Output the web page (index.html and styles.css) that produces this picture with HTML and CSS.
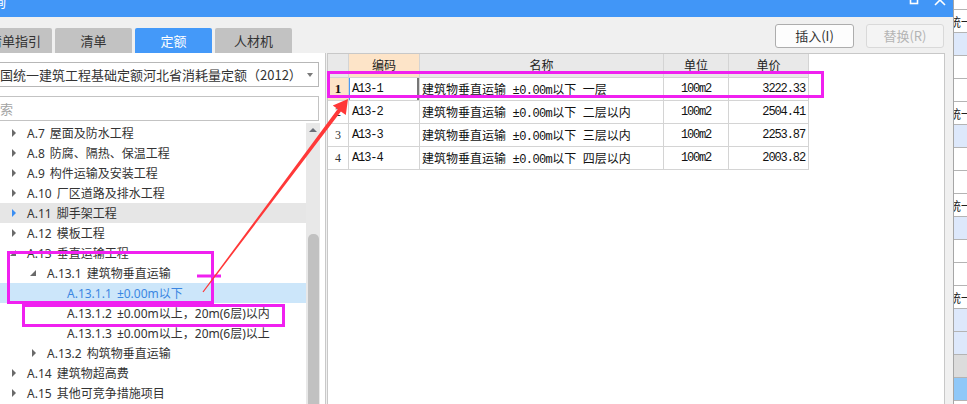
FILE: index.html
```html
<!DOCTYPE html>
<html lang="zh">
<head>
<meta charset="utf-8">
<title>定额</title>
<link rel="stylesheet" href="styles.css">
</head>
<body>
<div class="screen">
  <div class="window">
    <div class="titlebar">
      <span class="title">询</span>
      <div class="winctl">
        <svg class="ic" width="12" height="6" viewBox="0 0 12 6"><rect x="2.5" y="-5" width="7" height="8.5" fill="none" stroke="#fff" stroke-width="1.6"/></svg>
        <svg class="ic" width="12" height="6" viewBox="0 0 12 6"><path d="M1 -5 L11 5 M11 -5 L1 5" stroke="#fff" stroke-width="1.6"/></svg>
      </div>
    </div>
    <div class="main">
      <div class="left">
        <div class="tabs">
          <div class="tab first">清单指引</div>
          <div class="tab">清单</div>
          <div class="tab active">定额</div>
          <div class="tab">人材机</div>
        </div>
        <div class="leftpanel">
          <div class="select"><span class="select-text">全国统一建筑工程基础定额河北省消耗量定额（2012）</span><span class="caret"></span></div>
          <div class="search"><span class="placeholder">搜索</span></div>
          <div class="treewrap">
            <div class="tree">
              <div class="node l0"><i class="tri"></i><span>A.7 屋面及防水工程</span></div>
              <div class="node l0"><i class="tri"></i><span>A.8 防腐、隔热、保温工程</span></div>
              <div class="node l0"><i class="tri"></i><span>A.9 构件运输及安装工程</span></div>
              <div class="node l0"><i class="tri"></i><span>A.10 厂区道路及排水工程</span></div>
              <div class="node l0 hover"><i class="tri blue"></i><span>A.11 脚手架工程</span></div>
              <div class="node l0"><i class="tri"></i><span>A.12 模板工程</span></div>
              <div class="node l0"><i class="tri open"></i><span>A.13 垂直运输工程</span></div>
              <div class="node l1"><i class="tri open"></i><span>A.13.1 建筑物垂直运输</span></div>
              <div class="node l2 selected"><i class="tri none"></i><span>A.13.1.1 ±0.00m以下</span></div>
              <div class="node l2"><i class="tri none"></i><span>A.13.1.2 ±0.00m以上，20m(6层)以内</span></div>
              <div class="node l2"><i class="tri none"></i><span>A.13.1.3 ±0.00m以上，20m(6层)以上</span></div>
              <div class="node l1"><i class="tri"></i><span>A.13.2 构筑物垂直运输</span></div>
              <div class="node l0"><i class="tri"></i><span>A.14 建筑物超高费</span></div>
              <div class="node l0"><i class="tri"></i><span>A.15 其他可竞争措施项目</span></div>
            </div>
            <div class="vscroll"><span class="up"></span><span class="thumb"></span></div>
          </div>
        </div>
      </div>
      <div class="right">
        <div class="toolbar">
          <button class="btn">插入(I)</button>
          <button class="btn disabled" disabled>替换(R)</button>
        </div>
        <div class="gridpanel">
          <table class="grid">
            <colgroup>
              <col class="c-num"><col class="c-code"><col class="c-name"><col class="c-unit"><col class="c-price">
            </colgroup>
            <thead>
              <tr><th></th><th class="hcur">编码</th><th>名称</th><th>单位</th><th>单价</th></tr>
            </thead>
            <tbody>
              <tr class="cur"><td class="num">1</td><td class="code focus">A13-1</td><td class="name">建筑物垂直运输<span class="m"> ±0.00m</span>以下<span class="m"> </span>一层</td><td class="unit">100m2</td><td class="price">3222.33</td></tr>
              <tr><td class="num">2</td><td class="code">A13-2</td><td class="name">建筑物垂直运输<span class="m"> ±0.00m</span>以下<span class="m"> </span>二层以内</td><td class="unit">100m2</td><td class="price">2504.41</td></tr>
              <tr><td class="num">3</td><td class="code">A13-3</td><td class="name">建筑物垂直运输<span class="m"> ±0.00m</span>以下<span class="m"> </span>三层以内</td><td class="unit">100m2</td><td class="price">2253.87</td></tr>
              <tr><td class="num">4</td><td class="code">A13-4</td><td class="name">建筑物垂直运输<span class="m"> ±0.00m</span>以下<span class="m"> </span>四层以内</td><td class="unit">100m2</td><td class="price">2003.82</td></tr>
            </tbody>
          </table>
        </div>
      </div>
    </div>
  </div>
  <div class="behind">
    <div class="brow first"></div>
    <div class="brow"><span>统一</span></div>
    <div class="brow b"></div>
    <div class="brow"></div>
    <div class="brow"></div>
    <div class="brow"><span>统一</span></div>
    <div class="brow b"></div>
    <div class="brow"></div>
    <div class="brow"></div>
    <div class="brow"><span>统一</span></div>
    <div class="brow b"></div>
    <div class="brow"></div>
    <div class="brow"></div>
    <div class="brow"><span>统一</span></div>
    <div class="brow b"></div>
    <div class="brow b"></div>
    <div class="brow g"></div>
    <div class="brow bb"></div>
    <div class="brow"></div>
  </div>
  <svg class="annot" width="967" height="404" viewBox="0 0 967 404">
    <rect x="328.5" y="72.5" width="494" height="24" fill="none" stroke="#f020f0" stroke-width="3"/>
    <rect x="8.5" y="252.5" width="204" height="50" fill="none" stroke="#f020f0" stroke-width="3"/>
    <line x1="197" y1="276" x2="221" y2="276" stroke="#f020f0" stroke-width="3"/>
    <rect x="23.5" y="305.5" width="260" height="20" fill="none" stroke="#f020f0" stroke-width="3"/>
    <polygon points="202.5,291.7 337.7,109.1 332.8,105.6 348,99 345.8,115 340.9,111.5 203.5,292.3" fill="#ff3838"/>
  </svg>
</div>
</body>
</html>
```

FILE: styles.css
```css
* { box-sizing: border-box; }
html, body { margin: 0; padding: 0; }
body {
  font-family: "Noto Sans", "Noto Sans CJK SC", sans-serif;
  font-size: 12px;
  color: #333;
  background: #f0f0f0;
}
.screen {
  position: relative;
  display: flex;
  width: 967px;
  height: 404px;
  overflow: hidden;
}
.window {
  width: 953px;
  flex: none;
  display: flex;
  flex-direction: column;
  background: #f0f0f0;
}
.titlebar {
  height: 17px;
  flex: none;
  background: #4196f7;
  display: flex;
  align-items: flex-start;
  overflow: hidden;
}
.title {
  color: #fff;
  font-size: 13px;
  line-height: 13px;
  margin-top: -4px;
  margin-left: -7px;
}
.winctl {
  margin-left: auto;
  display: flex;
  gap: 14px;
  padding-right: 7px;
}
.ic { display: block; }
.main {
  flex: 1;
  display: flex;
  min-height: 0;
}
.left {
  width: 326px;
  flex: none;
  display: flex;
  flex-direction: column;
}
.tabs {
  margin-top: 11px;
  height: 25px;
  display: flex;
  gap: 3px;
  flex: none;
}
.tab {
  width: 77px;
  flex: none;
  height: 25px;
  line-height: 25px;
  text-align: center;
  font-family: "Noto Sans CJK SC", sans-serif;
  font-size: 13px;
  color: #333;
  background: #c2c2c2;
  border-radius: 2px 2px 0 0;
  white-space: nowrap;
  overflow: hidden;
}
.tab.first { width: 74px; margin-left: -22px; }
.tab.active { background: #4499f9; color: #fff; }
.leftpanel {
  flex: 1;
  background: #fff;
  border-right: 1px solid #c9c9c9;
  padding-top: 9px;
  display: flex;
  flex-direction: column;
  min-height: 0;
  overflow: hidden;
}
.select {
  height: 25px;
  width: 343px;
  margin-left: -24px;
  border: 1px solid #b7b7b7;
  display: flex;
  align-items: center;
  padding-left: 10px;
  padding-right: 5px;
  flex: none;
  overflow: hidden;
}
.select-text {
  font-family: "Noto Sans CJK SC", sans-serif;
  font-size: 13px;
  color: #333;
  white-space: nowrap;
  flex: none;
}
.caret {
  margin-left: auto;
  width: 0;
  height: 0;
  flex: none;
  border-left: 3.5px solid transparent;
  border-right: 3.5px solid transparent;
  border-top: 4px solid #7a7a7a;
}
.search {
  height: 25px;
  width: 343px;
  margin-left: -24px;
  margin-top: 9px;
  border: 1px solid #c3c3c3;
  display: flex;
  align-items: center;
  padding-left: 10px;
  flex: none;
}
.placeholder {
  font-family: "Noto Sans CJK SC", sans-serif;
  font-size: 13px;
  color: #a3a3a3;
}
.treewrap {
  margin-top: 2px;
  flex: 1;
  display: flex;
  min-height: 0;
}
.tree {
  width: 306px;
  flex: none;
}
.node {
  height: 20px;
  display: flex;
  align-items: center;
  white-space: nowrap;
  color: #333;
  word-spacing: 2px;
}
.node.l0 { padding-left: 10px; }
.node.l1 { padding-left: 30px; }
.node.l2 { padding-left: 50px; }
.node.hover { background: #e6e6e6; }
.node.selected { background: #cce6fa; color: #3b86e2; }
.tri {
  width: 17px;
  height: 20px;
  flex: none;
  position: relative;
  display: block;
}
.tri::before {
  content: "";
  position: absolute;
  left: 2px;
  top: 6px;
  border-left: 4px solid #6a6a6a;
  border-top: 4px solid transparent;
  border-bottom: 4px solid transparent;
}
.tri.blue::before { border-left-color: #3a8ef2; }
.tri.open::before {
  left: 0;
  top: 7px;
  border: none;
  width: 6px;
  height: 6px;
  background: #6a6a6a;
  clip-path: polygon(100% 0, 100% 100%, 0 100%);
}
.tri.none::before { display: none; }
.vscroll {
  width: 14px;
  flex: none;
  background: #e8e8e8;
  display: flex;
  flex-direction: column;
  align-items: center;
  padding-top: 5px;
  overflow: hidden;
}
.up {
  width: 0;
  height: 0;
  border-left: 4.5px solid transparent;
  border-right: 4.5px solid transparent;
  border-bottom: 4px solid #6b6f78;
  flex: none;
}
.thumb {
  margin-top: 102px;
  width: 11px;
  height: 220px;
  border-radius: 5px;
  background: #c1c1c1;
  flex: none;
}
.right {
  flex: 1;
  display: flex;
  flex-direction: column;
  padding-left: 1px;
  min-width: 0;
}
.toolbar {
  height: 36px;
  flex: none;
  display: flex;
  justify-content: flex-end;
  align-items: flex-start;
  padding-top: 7px;
  padding-right: 9px;
  gap: 12px;
}
.btn {
  width: 79px;
  height: 24px;
  margin: 0;
  padding: 0;
  border: 1px solid #adadad;
  border-radius: 3px;
  background: #fdfdfd;
  font-family: "Noto Sans CJK SC", sans-serif;
  font-size: 13px;
  color: #333;
  line-height: 20px;
}
.btn.disabled {
  width: 78px;
  border-color: #d9d9d9;
  background: #f4f4f4;
  color: #b4b4b4;
}
.gridpanel {
  flex: 1;
  margin-right: 8px;
  background: #fff;
  border: 1px solid #c8c8c8;
  border-bottom: none;
}
.grid {
  border-collapse: separate;
  border-spacing: 0;
  table-layout: fixed;
  width: 481px;
}
.c-num { width: 21px; }
.c-code { width: 71px; }
.c-name { width: 244px; }
.c-unit { width: 65px; }
.c-price { width: 80px; }
.grid th, .grid td {
  padding: 0;
  border-right: 1px solid #d4d4d4;
  border-bottom: 1px solid #d4d4d4;
  white-space: nowrap;
  overflow: hidden;
}
.grid thead tr { height: 24px; }
.grid th {
  background: #e9e9e9;
  font-family: "Noto Sans CJK SC", sans-serif;
  font-weight: normal;
  font-size: 12px;
  color: #222;
  text-align: center;
  line-height: 14px;
  vertical-align: top;
  padding-top: 4px;
}
.grid th.hcur { background: #fde4c8; }
.grid tbody tr { height: 23px; }
.grid td {
  font-family: "Noto Sans CJK SC", sans-serif;
  font-size: 12px;
  color: #111;
  vertical-align: middle;
}
.grid td.num {
  text-align: center;
  font-family: "Liberation Serif", serif;
  font-size: 12px;
  color: #333;
}
.grid tr.cur td.num {
  background: #fde4c8;
  font-weight: bold;
  font-size: 13px;
  color: #111;
}
.grid td.code {
  padding-left: 3px;
  font-family: "Liberation Mono", monospace;
  font-size: 12px;
  letter-spacing: -1.1px;
}
.grid td.code.focus {
  box-shadow: inset 1px 0 0 #4a9af5, inset -2px 0 0 #777;
}
.grid td.name { padding-left: 2px; }
.m {
  font-family: "Liberation Mono", monospace;
  font-size: 12px;
  letter-spacing: -0.6px;
  white-space: pre;
}
.grid td.unit {
  text-align: center;
  font-family: "Liberation Mono", monospace;
  font-size: 12px;
  letter-spacing: -1.2px;
}
.grid td.price {
  text-align: right;
  padding-right: 3px;
  font-family: "Liberation Mono", monospace;
  font-size: 12px;
  letter-spacing: -1.1px;
}
.behind {
  width: 14px;
  flex: none;
  background: #fff;
  border-left: 1px solid #a6a6a6;
  display: flex;
  flex-direction: column;
  overflow: hidden;
}
.brow {
  height: 23px;
  flex: none;
  border-bottom: 1px solid #b4b4b4;
  background: #fff;
  display: flex;
  align-items: center;
  overflow: hidden;
  white-space: nowrap;
}
.brow.first { height: 10px; }
.brow.b { background: #dde8fb; }
.brow.g { background: #dcdcdc; }
.brow.bb { background: #90c8f8; }
.brow span {
  font-family: "Noto Sans CJK SC", sans-serif;
  font-size: 12px;
  color: #222;
  margin-left: -5px;
}
.annot {
  position: absolute;
  left: 0;
  top: 0;
  pointer-events: none;
}
```
